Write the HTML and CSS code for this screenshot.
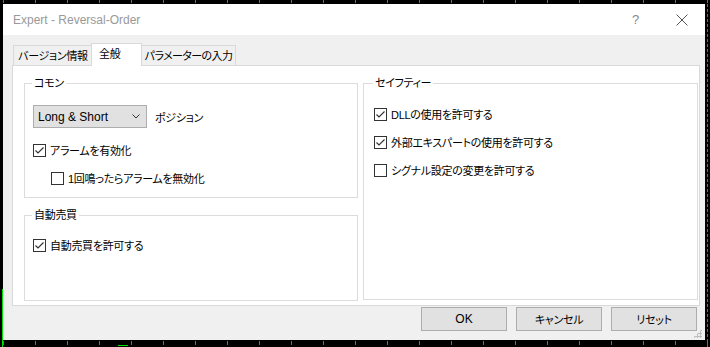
FILE: index.html
```html
<!DOCTYPE html>
<html lang="ja">
<head>
  <meta charset="UTF-8" />
  <title>Expert - Reversal-Order</title>
  <link rel="stylesheet" href="styles.css">
</head>
<body>

  <div class="window">
    <div class="titlebar">
      <span class="title">Expert - Reversal-Order</span>
      <span class="help">?</span>
      <svg class="close" width="12" height="12" viewBox="0 0 12 12">
        <path d="M0.5 0.5 L11.5 11.5 M11.5 0.5 L0.5 11.5" stroke="#555" stroke-width="1" fill="none"/>
      </svg>
    </div>

    <div class="content">
      <div class="tabs">
        <div class="tab first">バージョン情報</div>
        <div class="tab active">全般</div>
        <div class="tab last">パラメーターの入力</div>
      </div>

      <div class="panel">
        <div class="col">
          <fieldset class="group common">
            <legend>コモン</legend>
            <div class="select-row">
              <div class="select">
                <span>Long &amp; Short</span>
                <svg width="8" height="5" viewBox="0 0 8 5">
                  <polyline points="0.5,0.5 4,4 7.5,0.5" stroke="#333" stroke-width="1" fill="none"/>
                </svg>
              </div>
              <span class="select-label">ポジション</span>
            </div>
            <label class="check first-check">
              <span class="box"><svg width="11" height="11" viewBox="0 0 11 11"><polyline points="1.5,5.5 4,8 9.5,2.5" stroke="#333" stroke-width="1.2" fill="none"/></svg></span>
              アラームを有効化
            </label>
            <label class="check sub">
              <span class="box"></span>
              1回鳴ったらアラームを無効化
            </label>
          </fieldset>

          <fieldset class="group trade">
            <legend>自動売買</legend>
            <label class="check trade-check">
              <span class="box"><svg width="11" height="11" viewBox="0 0 11 11"><polyline points="1.5,5.5 4,8 9.5,2.5" stroke="#333" stroke-width="1.2" fill="none"/></svg></span>
              自動売買を許可する
            </label>
          </fieldset>
        </div>

        <div class="col">
          <fieldset class="group safety">
            <legend>セイフティー</legend>
            <label class="check first-check">
              <span class="box"><svg width="11" height="11" viewBox="0 0 11 11"><polyline points="1.5,5.5 4,8 9.5,2.5" stroke="#333" stroke-width="1.2" fill="none"/></svg></span>
              DLLの使用を許可する
            </label>
            <label class="check">
              <span class="box"><svg width="11" height="11" viewBox="0 0 11 11"><polyline points="1.5,5.5 4,8 9.5,2.5" stroke="#333" stroke-width="1.2" fill="none"/></svg></span>
              外部エキスパートの使用を許可する
            </label>
            <label class="check">
              <span class="box"></span>
              シグナル設定の変更を許可する
            </label>
          </fieldset>
        </div>
      </div>

      <div class="buttons">
        <button class="ok">OK</button>
        <button>キャンセル</button>
        <button>リセット</button>
      </div>
    </div>

    <div class="grip"></div>
  </div>

  <div class="chart-edge"></div>

</body>
</html>
```

FILE: styles.css
```css
body {
  margin: 0;
  width: 710px;
  height: 347px;
  background-color: #000;
  background-image:
    repeating-linear-gradient(90deg, transparent 0 3px, #6f6f6f 3px 4px, transparent 4px 32px),
    repeating-linear-gradient(90deg, transparent 0 3px, #6f6f6f 3px 4px, transparent 4px 32px),
    linear-gradient(#00e000, #00e000),
    linear-gradient(#00e000, #00e000);
  background-size: 100% 3px, 100% 4px, 1px 58px, 10px 1px;
  background-position: 0 0, 0 341px, 2px 289px, 118px 345px;
  background-repeat: no-repeat;
  display: flex;
  padding: 4px 0 0 3px;
  box-sizing: border-box;
  font-family: 'Liberation Sans', 'Noto Sans CJK JP', sans-serif;
  font-size: 11px;
  letter-spacing: -0.3px;
  font-feature-settings: "palt";
  color: #000;
}

.window {
  width: 702px;
  height: 336px;
  background: #f0f0f0;
  display: flex;
  flex-direction: column;
  position: relative;
}

.chart-edge {
  width: 0;
  height: 100%;
  margin-left: 2px;
  border-left: 1px dashed #6a6a6a;
}

.titlebar {
  height: 31px;
  background: #fff;
  display: flex;
  align-items: center;
  padding-left: 10px;
}

.title {
  color: #999;
  font-size: 12px;
  letter-spacing: 0;
  flex: 1;
}

.help {
  color: #888;
  font-size: 13px;
  margin-right: 37px;
}

.close {
  margin-right: 17px;
}

.content {
  padding: 8px 5px 0 9px;
}

.tabs {
  display: flex;
  align-items: flex-end;
  margin-left: 1px;
  margin-bottom: -1px;
  position: relative;
  z-index: 1;
}

.tab {
  height: 20px;
  line-height: 20px;
  white-space: nowrap;
  text-align: center;
  border: 1px solid #d9d9d9;
  border-bottom: none;
  margin-bottom: 1px;
  box-sizing: border-box;
}

.tab.first {
  border-right: none;
  width: 78px;
  padding-left: 1px;
}

.tab.last {
  border-left: none;
  width: 94px;
  letter-spacing: -0.6px;
}

.tab.active {
  background: #fff;
  height: 23px;
  line-height: 20px;
  margin-bottom: 0;
  width: 51px;
  text-align: left;
  padding-left: 7px;
}

.panel {
  height: 241px;
  box-sizing: border-box;
  border: 1px solid #d9d9d9;
  background: #fff;
  display: grid;
  grid-template-columns: 334px 335px;
  column-gap: 5px;
  align-items: start;
  padding: 9px 1px 0 11px;
}

.col {
  display: flex;
  flex-direction: column;
  gap: 9px;
}

.group {
  margin: 0;
  border: 1px solid #dcdcdc;
  padding: 0 0 0 8px;
  box-sizing: border-box;
  display: flex;
  flex-direction: column;
  min-width: 0;
}

.group legend {
  padding: 0 2px;
  margin-left: -1px;
  line-height: 16px;
}

.common {
  height: 123px;
}

.trade {
  height: 94px;
}

.safety {
  height: 225px;
  padding-left: 10px;
}

.select-row {
  display: flex;
  align-items: center;
  margin-top: 14px;
}

.select {
  width: 114px;
  height: 23px;
  box-sizing: border-box;
  background: #e1e1e1;
  border: 1px solid #adadad;
  display: flex;
  align-items: center;
  justify-content: space-between;
  padding: 0 6px 0 4px;
  font-size: 12px;
  letter-spacing: 0;
}

.select-label {
  margin-left: 8px;
}

.check {
  display: flex;
  align-items: center;
  height: 20px;
  margin-top: 8px;
}

.check.first-check {
  margin-top: 12px;
}

.safety .check.first-check {
  margin-top: 13px;
}

.check.trade-check {
  margin-top: 12px;
}

.check.sub {
  margin-left: 18px;
}

.box {
  width: 13px;
  height: 13px;
  box-sizing: border-box;
  border: 1px solid #333;
  background: #fff;
  margin-right: 4px;
  display: flex;
  align-items: center;
  justify-content: center;
}

.box svg {
  display: block;
}

.buttons {
  display: flex;
  justify-content: flex-end;
  gap: 9px;
  margin-top: 1px;
  margin-right: 3px;
}

button {
  width: 86px;
  height: 24px;
  background: #e1e1e1;
  border: 1px solid #adadad;
  font-family: inherit;
  font-size: 11px;
  letter-spacing: -0.3px;
  font-feature-settings: "palt";
  color: #000;
  padding: 0;
}

button.ok {
  font-size: 12px;
  letter-spacing: 0;
}

.grip {
  position: absolute;
  right: 3px;
  bottom: 2px;
  width: 9px;
  height: 9px;
  background:
    radial-gradient(circle, #bdbdbd 1px, transparent 1.2px) 0 0 / 3px 3px;
  clip-path: polygon(100% 0, 100% 100%, 0 100%);
}
```
